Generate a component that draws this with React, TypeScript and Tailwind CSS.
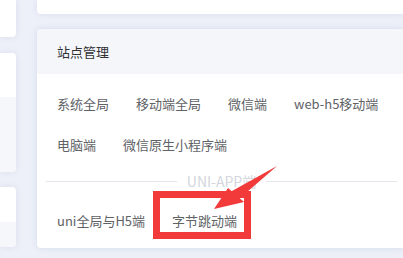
const font = { fontFamily: '"Noto Sans CJK SC", "Noto Sans", sans-serif' }

const platforms = ["系统全局", "移动端全局", "微信端", "web-h5移动端", "电脑端", "微信原生小程序端"]
const uniApps = ["uni全局与H5端", "字节跳动端"]

const SideCard = ({ h, greyFrom }: { h: string; greyFrom?: string }) => (
  <div className={`${h} w-full rounded-r-[4px] bg-white shadow-[0_0_6px_rgba(180,190,220,0.35)] overflow-hidden flex flex-col`}>
    <div className={greyFrom ?? "flex-1"}></div>
    {greyFrom && <div className="flex-1 bg-[#f5f7fa]"></div>}
  </div>
)

export default function App() {
  return (
    <div className="relative w-[403px] h-[258px] overflow-hidden bg-[#edf0f8] flex gap-[21px] text-[13px]" style={font}>
      {/* left column */}
      <div className="w-[16px] shrink-0 flex flex-col">
        <div className="h-[37px] w-full rounded-br-[4px] bg-white shadow-[0_0_6px_rgba(180,190,220,0.35)]"></div>
        <div className="mt-[16px]">
          <SideCard h="h-[119px]" greyFrom="h-[44px]" />
        </div>
        <div className="mt-[15px]">
          <SideCard h="h-[60px]" greyFrom="h-[35px]" />
        </div>
      </div>

      {/* main column */}
      <div className="w-[369px] shrink-0 flex flex-col">
        <div className="h-[14px] rounded-b-[4px] bg-white shadow-[0_0_6px_rgba(180,190,220,0.35)]"></div>
        <div className="mt-[15px] h-[219px] rounded-[4px] bg-white shadow-[0_0_6px_rgba(180,190,220,0.45)] overflow-hidden flex flex-col">
          <div className="h-[45px] bg-[#f4f6fa] flex items-center pl-[20px] text-[#303133]">站点管理</div>
          <div className="px-[9px]">
            <div className="flex flex-wrap gap-x-[27px] gap-y-[21px] pl-[11px] pt-[20px] text-[#606266]">
              {platforms.map((p) => (
                <span key={p} className="leading-[20px]">{p}</span>
              ))}
            </div>
            <div className="mt-[16px] flex items-center">
              <div className="flex-1 h-px bg-[#e4e7ed]"></div>
              <span className="px-[10px] text-[14px] leading-[20px] text-[#d3d6dd]">UNI-APP端</span>
              <div className="flex-1 h-px bg-[#e4e7ed]"></div>
            </div>
            <div className="flex gap-x-[27px] pl-[11px] pt-[20px] text-[#606266]">
              {uniApps.map((p) => (
                <span key={p} className="leading-[20px]">{p}</span>
              ))}
            </div>
          </div>
        </div>
      </div>

      {/* annotation */}
      <div className="absolute left-[153px] top-[191px] w-[98px] h-[48px] border-[7px] border-[#f23a3a]"></div>
      <svg className="absolute left-0 top-0" width="403" height="258" viewBox="0 0 403 258">
        <polygon points="277,166 239,199 232,191" fill="#f23a3a" />
        <polygon points="214,209 228,188 244,202" fill="#f23a3a" />
      </svg>
    </div>
  )
}
